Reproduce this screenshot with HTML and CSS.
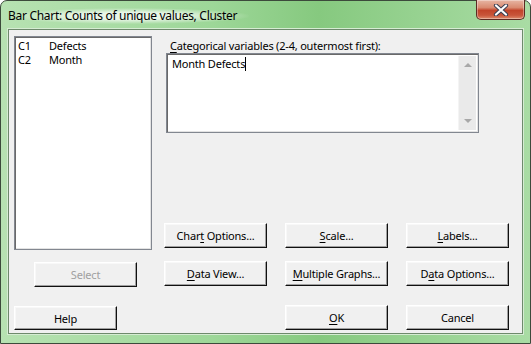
FILE: index.html
```html
<!DOCTYPE html>
<html lang="en">
<head>
    <meta charset="UTF-8">
    <title>Bar Chart: Counts of unique values, Cluster</title>
    <link rel="stylesheet" href="styles.css">
</head>
<body>
    <div class="window">
        <div class="title-bar">
            <span class="title">Bar Chart: Counts of unique values, Cluster</span>
            <button class="close-btn" title="Close">
                <svg width="16" height="12" viewBox="0 0 16 12">
                    <path d="M3 1.5 L13 10.5 M13 1.5 L3 10.5" stroke="#3b3f52" stroke-width="4.2" stroke-linecap="round"/>
                    <path d="M3 1.5 L13 10.5 M13 1.5 L3 10.5" stroke="#ffffff" stroke-width="2.2" stroke-linecap="round"/>
                </svg>
            </button>
        </div>

        <div class="client">
            <div class="left-col">
                <ul class="var-list">
                    <li><span class="col-id">C1</span><span>Defects</span></li>
                    <li><span class="col-id">C2</span><span>Month</span></li>
                </ul>
                <button class="btn btn-select" disabled>Select</button>
                <button class="btn btn-help">Help</button>
            </div>

            <div class="right-col">
                <label class="field-label"><u>C</u>ategorical variables (2-4, outermost first):</label>
                <div class="text-box">
                    <div class="text-area">Month Defects<span class="caret"></span></div>
                    <div class="scroll-bar">
                        <span class="arrow arrow-up"></span>
                        <span class="arrow arrow-down"></span>
                    </div>
                </div>

                <div class="button-grid">
                    <button class="btn">Char<u>t</u> Options...</button>
                    <button class="btn"><u>S</u>cale...</button>
                    <button class="btn"><u>L</u>abels...</button>
                    <button class="btn"><u>D</u>ata View...</button>
                    <button class="btn"><u>M</u>ultiple Graphs...</button>
                    <button class="btn">D<u>a</u>ta Options...</button>
                    <span></span>
                    <button class="btn btn-last"><u>O</u>K</button>
                    <button class="btn btn-last">Cancel</button>
                </div>
            </div>
        </div>
    </div>
</body>
</html>
```

FILE: styles.css
```css
body {
    margin: 0;
    background: #ffffff;
    font-family: "Noto Sans", "Liberation Sans", sans-serif;
    font-size: 11px;
    letter-spacing: -0.2px;
    color: #000;
}

.window {
    width: 531px;
    height: 344px;
    box-sizing: border-box;
    border: 1px solid #3c4a3b;
    border-radius: 7px 7px 0 0;
    background: linear-gradient(90deg, #b7e2b2 0%, #9dd798 40%, #86c97f 60%, #a9dca4 100%);
    padding: 0 7px 9px 7px;
    display: flex;
    flex-direction: column;
}

.title-bar {
    height: 28px;
    display: flex;
    align-items: flex-start;
    justify-content: space-between;
}

.title {
    margin-top: 7px;
    padding: 0 12px 0 0;
    font-size: 12px;
    letter-spacing: -0.3px;
    line-height: 16px;
    color: #000;
    background: radial-gradient(ellipse at center, rgba(255,255,255,0.75) 30%, rgba(255,255,255,0) 72%);
}

.close-btn {
    width: 49px;
    height: 20px;
    margin-top: -1px;
    margin-right: -2px;
    border: 1px solid #5b2b22;
    border-top: none;
    border-radius: 0 0 5px 5px;
    background: linear-gradient(180deg, #e7b6a4 0%, #d98a70 40%, #c2442a 55%, #c8553a 80%, #de8b6c 100%);
    box-shadow: inset 0 0 0 1px rgba(255,255,255,0.35);
    display: flex;
    align-items: center;
    justify-content: center;
    padding: 0;
}

.client {
    flex: 1;
    background: #f0f0f0;
    border: 1px solid #6e8a6c;
    box-shadow: 0 0 0 1px #d6ecd3;
    padding: 6px 6px 0 5px;
    display: flex;
    gap: 12px;
}

.left-col {
    width: 138px;
    display: flex;
    flex-direction: column;
}

.var-list {
    list-style: none;
    margin: 0;
    padding: 2px 0 0 3px;
    height: 214px;
    box-sizing: border-box;
    background: #fff;
    border: 1px solid #828790;
    box-shadow: inset 1px 1px 0 #696969, inset -1px -1px 0 #e3e3e3;
}

.var-list li {
    line-height: 14px;
    display: flex;
}

.var-list .col-id {
    width: 31px;
}

.btn {
    font-family: "Noto Sans", "Liberation Sans", sans-serif;
    font-size: 11px;
    letter-spacing: -0.2px;
    color: #000;
    height: 25px;
    width: 103px;
    padding: 0;
    background: #f0f0f0;
    border: 1px solid;
    border-color: #ffffff #101010 #101010 #ffffff;
    box-shadow: inset -1px -1px 0 #a0a0a0, inset 1px 1px 0 #f8f8f8;
}

.btn u {
    text-decoration-thickness: 1px;
    text-underline-offset: 2px;
}

.btn-select {
    margin: 12px 0 0 20px;
    color: #a0a0a0;
}

.btn-help {
    margin-top: 19px;
    height: 24px;
}

.right-col {
    flex: 1;
    display: flex;
    flex-direction: column;
}

.field-label {
    margin: 2px 0 0 6px;
    line-height: 15px;
}

.field-label u {
    text-underline-offset: 2px;
}

.text-box {
    margin: 0 0 0 2px;
    width: 313px;
    height: 80px;
    box-sizing: border-box;
    background: #fff;
    border: 1px solid #828790;
    box-shadow: inset 1px 1px 0 #696969, inset -1px -1px 0 #e3e3e3;
    display: flex;
    padding: 2px 2px 2px 2px;
}

.text-area {
    flex: 1;
    padding: 0 0 0 3px;
    line-height: 16px;
}

.caret {
    display: inline-block;
    width: 1px;
    height: 14px;
    background: #000;
    vertical-align: -3px;
}

.scroll-bar {
    width: 17px;
    background: #eaeaea;
    border-left: 1px solid #f4f4f4;
    display: flex;
    flex-direction: column;
    justify-content: space-between;
    align-items: center;
    padding: 7px 0 7px 0;
}

.arrow {
    width: 0;
    height: 0;
    border-left: 4px solid transparent;
    border-right: 4px solid transparent;
}

.arrow-up {
    border-bottom: 4px solid #a8a8a8;
}

.arrow-down {
    border-top: 4px solid #a8a8a8;
}

.button-grid {
    margin-top: 90px;
    display: grid;
    grid-template-columns: 103px 103px 103px;
    grid-template-rows: 25px 25px 24px;
    column-gap: 18px;
    row-gap: 13px;
}

.button-grid .btn-last {
    margin-top: 6px;
}
```
